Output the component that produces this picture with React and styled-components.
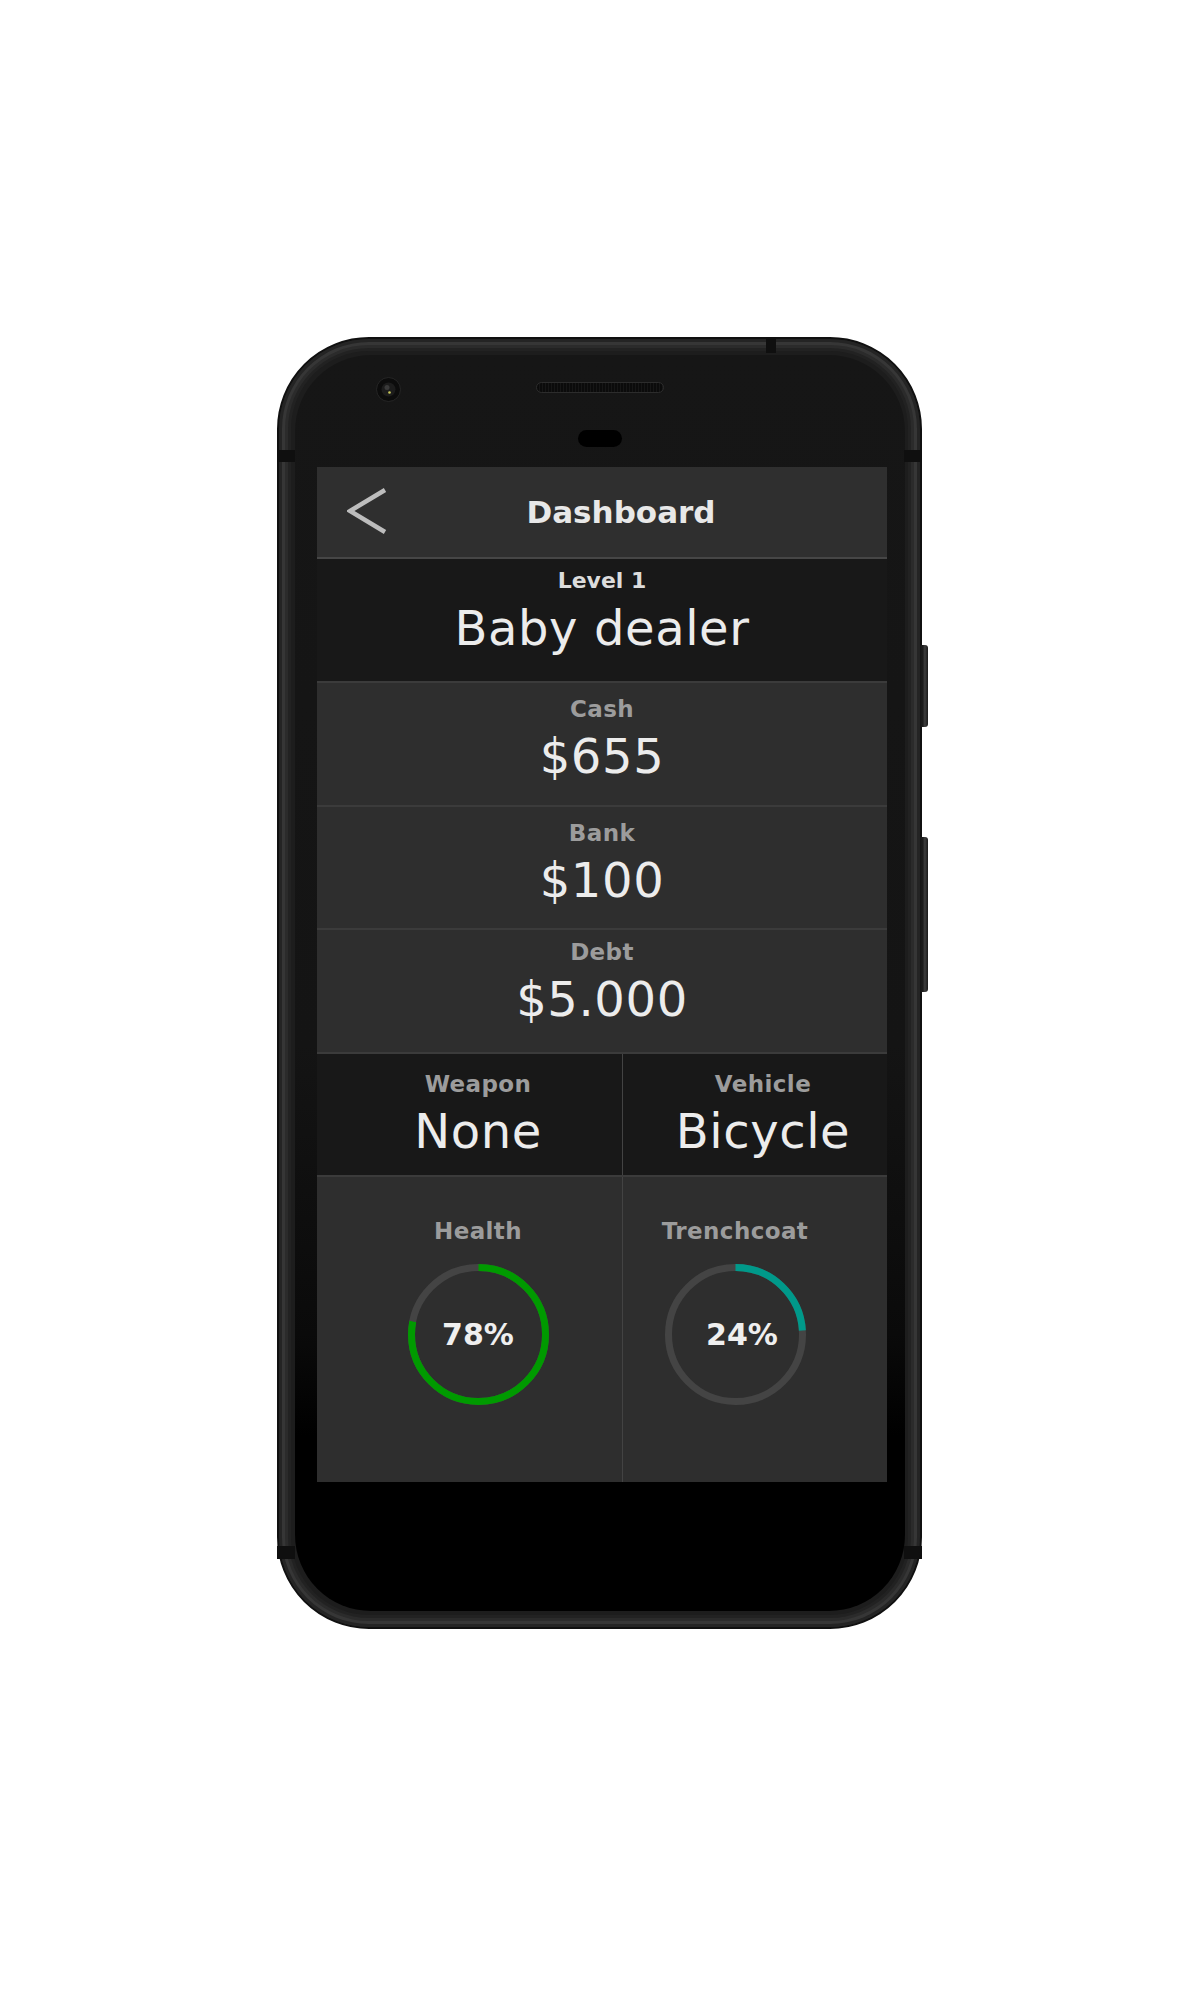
import React from 'react';
import styled, { createGlobalStyle } from 'styled-components';

const Global = createGlobalStyle`
  html, body { margin: 0; padding: 0; background: #ffffff; }
  body { font-family: "DejaVu Sans", "Liberation Sans", sans-serif; }
  *, *::before, *::after { box-sizing: border-box; }
`;

const Page = styled.div`
  min-height: 2000px;
  padding: 337px 0 0 277px;
`;

const Phone = styled.div`
  position: relative;
  width: 645px;
  height: 1292px;
  border-radius: 92px;
  background: #1d1d1d;
  border: 2px solid #101010;
  box-shadow:
    inset 0 0 0 3px #242424,
    inset 0 0 0 6px #363636,
    inset 0 0 0 9px #2b2b2b,
    inset 0 0 0 12px #222222;
  padding: 16px 15px 16px 16px;
`;

const SideButton = styled.div`
  position: absolute;
  right: -8px;
  top: ${(p) => p.$top}px;
  width: 8px;
  height: ${(p) => p.$h}px;
  border-radius: 0 3px 3px 0;
  background: linear-gradient(to right, #151515 0, #1c1c1c 35%, #3d3d3d 60%, #1a1a1a 100%);
`;

const Band = styled.div`
  position: absolute;
  background: #0f0f0f;
  ${(p) => p.$css}
`;

const Face = styled.div`
  height: 100%;
  border-radius: 76px;
  background: linear-gradient(to bottom, #161616 0%, #141414 55%, #0a0a0a 78%, #000 86%, #000 100%);
  padding: 0 18px 0 22px;
  display: flex;
  flex-direction: column;
  overflow: hidden;
`;

const TopRow = styled.div`
  display: flex;
  align-items: flex-start;
  height: 25px;
  margin-top: 22px;
  padding-left: 59px;
`;

const Camera = styled.svg`
  flex: none;
`;

const Speaker = styled.div`
  width: 128px;
  height: 11px;
  margin: 5px 0 0 135px;
  border-radius: 6px;
  border: 1px solid #2c2c2c;
  background: repeating-linear-gradient(90deg, #0b0b0b 0 2px, #161616 2px 3px);
`;

const Sensor = styled.div`
  width: 44px;
  height: 17px;
  margin: 28px 0 0 261px;
  border-radius: 9px;
  background: #000;
`;

const Screen = styled.main`
  width: 570px;
  margin-top: 20px;
  display: flex;
  flex-direction: column;
`;

const Header = styled.header`
  height: 92px;
  background: #2f2f2f;
  border-bottom: 2px solid #464646;
  display: flex;
  align-items: center;
  padding-left: 30px;
`;

const BackButton = styled.button`
  all: unset;
  display: flex;
  width: 40px;
  height: 46px;
  margin-top: -3px;
  cursor: pointer;
`;

const Title = styled.h1`
  flex: 1;
  margin: 0 32px 0 0;
  text-align: center;
  font-size: 31px;
  line-height: 36px;
  font-weight: 700;
  color: #e8e8e8;
`;

const StatRow = styled.section`
  height: ${(p) => p.$h}px;
  padding-top: ${(p) => p.$pt}px;
  background: ${(p) => p.$tone};
  border-bottom: 2px solid #3b3b3b;
  display: flex;
  flex-direction: column;
  align-items: center;
`;

const Label = styled.div`
  font-size: ${(p) => (p.$bright ? 22 : 23)}px;
  line-height: 26px;
  font-weight: 700;
  letter-spacing: ${(p) => (p.$bright ? 0 : 0.4)}px;
  color: ${(p) => (p.$bright ? '#dcdcdc' : '#9c9c9c')};
  white-space: nowrap;
`;

const Value = styled.div`
  margin-top: 6px;
  font-size: 48px;
  line-height: 56px;
  letter-spacing: 0.6px;
  color: #ececec;
  white-space: nowrap;
`;

const Split = styled.section`
  display: grid;
  grid-template-columns: 306px 1fr;
  height: ${(p) => p.$h}px;
  background: ${(p) => p.$tone};
  border-bottom: ${(p) => (p.$last ? 'none' : '2px solid #3b3b3b')};
`;

const Cell = styled.div`
  display: flex;
  flex-direction: column;
  align-items: center;
  padding: ${(p) => p.$pt}px ${(p) => p.$pr || 0}px 0 ${(p) => p.$pl || 0}px;
  ${(p) => p.$divider && 'border-right: 1px solid #434343;'}
`;

const Ring = styled.div`
  display: grid;
  width: 141px;
  height: 141px;
  margin-top: 20px;
  & > * { grid-area: 1 / 1; }
`;

const Percent = styled.div`
  place-self: center;
  margin-left: ${(p) => p.$shift || 0}px;
  font-size: 30px;
  line-height: 30px;
  font-weight: 700;
  color: #efefef;
`;

function Gauge({ pct, color, shift }) {
  const r = 67;
  const c = 2 * Math.PI * r;
  return (
    <Ring>
      <svg width="141" height="141" viewBox="0 0 141 141">
        <circle cx="70.5" cy="70.5" r={r} fill="none" stroke="#444444" strokeWidth="7" />
        <circle
          cx="70.5"
          cy="70.5"
          r={r}
          fill="none"
          stroke={color}
          strokeWidth="7"
          strokeDasharray={`${(c * pct) / 100} ${c}`}
          transform="rotate(-90 70.5 70.5)"
        />
      </svg>
      <Percent $shift={shift}>{pct}%</Percent>
    </Ring>
  );
}

export default function App() {
  return (
    <>
      <Global />
      <Page>
        <Phone>
          <SideButton $top={306} $h={82} />
          <SideButton $top={498} $h={155} />
          <Band $css="left: -2px; top: 111px; width: 18px; height: 12px;" />
          <Band $css="right: -2px; top: 111px; width: 18px; height: 12px;" />
          <Band $css="left: -2px; top: 1207px; width: 18px; height: 13px;" />
          <Band $css="right: -2px; top: 1207px; width: 18px; height: 13px;" />
          <Band $css="top: -2px; left: 487px; width: 10px; height: 16px;" />
          <Face>
            <TopRow>
              <Camera width="25" height="25" viewBox="0 0 25 25">
                <circle cx="12.5" cy="12.5" r="12" fill="#0c0c0c" stroke="#262626" strokeWidth="1" />
                <circle cx="12.5" cy="12.5" r="7" fill="#1c1c1c" />
                <circle cx="11" cy="10.5" r="2.5" fill="#3a3a3a" />
                <circle cx="13.5" cy="15.5" r="1.3" fill="#c9c95a" />
              </Camera>
              <Speaker />
            </TopRow>
            <Sensor />
            <Screen>
              <Header>
                <BackButton aria-label="Back">
                  <svg width="40" height="46" viewBox="0 0 40 46">
                    <polyline
                      points="38,2 3,23 38,44"
                      fill="none"
                      stroke="#bdbdbd"
                      strokeWidth="4.5"
                      strokeLinejoin="miter"
                    />
                  </svg>
                </BackButton>
                <Title>Dashboard</Title>
              </Header>
              <StatRow $h={124} $pt={9} $tone="#181818">
                <Label $bright>Level 1</Label>
                <Value>Baby dealer</Value>
              </StatRow>
              <StatRow $h={124} $pt={13} $tone="#2e2e2e">
                <Label>Cash</Label>
                <Value>$655</Value>
              </StatRow>
              <StatRow $h={123} $pt={13} $tone="#2e2e2e">
                <Label>Bank</Label>
                <Value>$100</Value>
              </StatRow>
              <StatRow $h={124} $pt={9} $tone="#2e2e2e">
                <Label>Debt</Label>
                <Value>$5.000</Value>
              </StatRow>
              <Split $h={123} $tone="#181818">
                <Cell $divider $pt={17} $pl={17}>
                  <Label>Weapon</Label>
                  <Value>None</Value>
                </Cell>
                <Cell $pt={17} $pl={16}>
                  <Label>Vehicle</Label>
                  <Value>Bicycle</Value>
                </Cell>
              </Split>
              <Split $h={305} $tone="#2e2e2e" $last>
                <Cell $divider $pt={41} $pl={17}>
                  <Label>Health</Label>
                  <Gauge pct={78} color="#009a00" />
                </Cell>
                <Cell $pt={41} $pr={40}>
                  <Label>Trenchcoat</Label>
                  <Gauge pct={24} color="#00998a" shift={14} />
                </Cell>
              </Split>
            </Screen>
          </Face>
        </Phone>
      </Page>
    </>
  );
}
